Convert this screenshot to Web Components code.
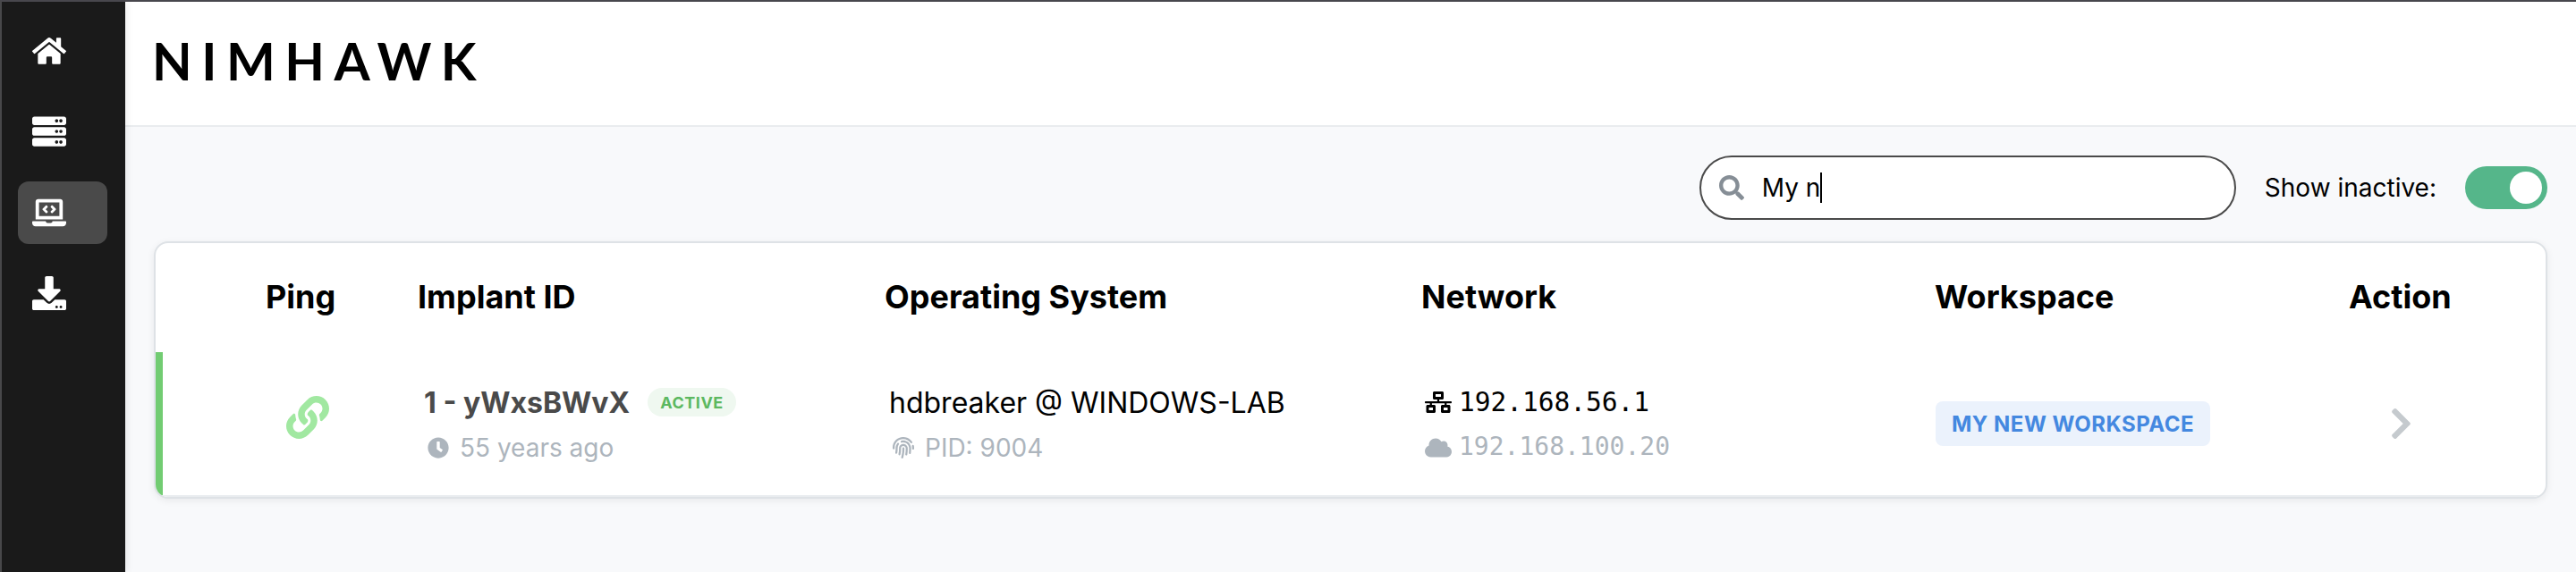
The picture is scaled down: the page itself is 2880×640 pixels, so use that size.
<!DOCTYPE html>
<html lang="en">
<head>
<meta charset="utf-8">
<title>Nimhawk</title>
<style>
html,body{margin:0;height:100%;background:#f8f9fb;font-family:Inter,"Noto Sans",sans-serif;color:#000}
body{height:640px;overflow:hidden}
</style>
</head>
<body>
<nh-shell>
  <nh-nav slot="nav">
    <nh-nav-item icon="home"></nh-nav-item>
    <nh-nav-item icon="server"></nh-nav-item>
    <nh-nav-item icon="laptop" active></nh-nav-item>
    <nh-nav-item icon="download"></nh-nav-item>
  </nh-nav>
  <nh-brand slot="header">NIMHAWK</nh-brand>
  <nh-toolbar>
    <nh-search>My n</nh-search>
    <nh-toggle>Show inactive:</nh-toggle>
  </nh-toolbar>
  <nh-table></nh-table>
</nh-shell>
<script>
const ICONS={
home:['0 0 576 512','M280.37 148.26L96 300.11V464a16 16 0 0 0 16 16l112.06-.29a16 16 0 0 0 15.92-16V368a16 16 0 0 1 16-16h64a16 16 0 0 1 16 16v95.64a16 16 0 0 0 16 16.05L464 480a16 16 0 0 0 16-16V300L295.67 148.26a12.19 12.19 0 0 0-15.3 0zM571.6 251.47L488 182.56V44.05a12 12 0 0 0-12-12h-56a12 12 0 0 0-12 12v72.61L318.47 43a48 48 0 0 0-61 0L4.34 251.47a12 12 0 0 0-1.6 16.9l25.5 31A12 12 0 0 0 45.15 301l235.22-193.74a12.19 12.19 0 0 1 15.3 0L530.9 301a12 12 0 0 0 16.9-1.6l25.5-31a12 12 0 0 0-1.7-16.93z'],
server:['0 0 512 512','M480 160H32c-17.673 0-32-14.327-32-32V64c0-17.673 14.327-32 32-32h448c17.673 0 32 14.327 32 32v64c0 17.673-14.327 32-32 32zm-48-88c-13.255 0-24 10.745-24 24s10.745 24 24 24 24-10.745 24-24-10.745-24-24-24zm-64 0c-13.255 0-24 10.745-24 24s10.745 24 24 24 24-10.745 24-24-10.745-24-24-24zm112 248H32c-17.673 0-32-14.327-32-32v-64c0-17.673 14.327-32 32-32h448c17.673 0 32 14.327 32 32v64c0 17.673-14.327 32-32 32zm-48-88c-13.255 0-24 10.745-24 24s10.745 24 24 24 24-10.745 24-24-10.745-24-24-24zm-64 0c-13.255 0-24 10.745-24 24s10.745 24 24 24 24-10.745 24-24-10.745-24-24-24zm112 248H32c-17.673 0-32-14.327-32-32v-64c0-17.673 14.327-32 32-32h448c17.673 0 32 14.327 32 32v64c0 17.673-14.327 32-32 32zm-48-88c-13.255 0-24 10.745-24 24s10.745 24 24 24 24-10.745 24-24-10.745-24-24-24zm-64 0c-13.255 0-24 10.745-24 24s10.745 24 24 24 24-10.745 24-24-10.745-24-24-24z'],
laptop:['0 0 640 512','M255.03 261.65c6.25 6.25 16.38 6.25 22.63 0l11.31-11.31c6.25-6.25 6.25-16.38 0-22.63L253.25 192l35.71-35.72c6.25-6.25 6.25-16.38 0-22.63l-11.31-11.31c-6.25-6.25-16.38-6.25-22.63 0l-58.34 58.34c-6.25 6.25-6.25 16.38 0 22.63l58.35 58.34zm96.01-11.3l11.31 11.31c6.25 6.25 16.38 6.25 22.63 0l58.34-58.34c6.25-6.25 6.25-16.38 0-22.63l-58.34-58.34c-6.25-6.25-16.38-6.25-22.63 0l-11.31 11.31c-6.25 6.25-6.25 16.38 0 22.63L386.75 192l-35.71 35.72c-6.25 6.25-6.25 16.38 0 22.63zM624 416H381.54c-.74 19.81-14.71 32-32.74 32H288c-18.69 0-33.02-17.47-32.77-32H16c-8.8 0-16 7.2-16 16v16c0 35.2 28.8 64 64 64h512c35.2 0 64-28.8 64-64v-16c0-8.8-7.2-16-16-16zM576 48c0-26.4-21.6-48-48-48H112C85.6 0 64 21.6 64 48v336h512V48zm-64 272H128V64h384v256z'],
download:['0 0 512 512','M216 0h80c13.3 0 24 10.7 24 24v168h87.7c17.800 0 26.700 21.500 14.100 34.100L269.700 378.300c-7.500 7.500-19.800 7.500-27.300 0L90.100 226.100c-12.600-12.600-3.700-34.100 14.100-34.100H192V24c0-13.300 10.700-24 24-24zm296 376v112c0 13.300-10.700 24-24 24H24c-13.300 0-24-10.700-24-24V376c0-13.300 10.700-24 24-24h146.700l49 49c20.100 20.100 52.500 20.100 72.600 0l49-49H488c13.300 0 24 10.700 24 24zm-124 88c0-11-9-20-20-20s-20 9-20 20 9 20 20 20 20-9 20-20zm64 0c0-11-9-20-20-20s-20 9-20 20 9 20 20 20 20-9 20-20z'],
search:['0 0 512 512','M505 442.700L405.300 343c-4.500-4.500-10.600-7-17-7H372c27.600-35.300 44-79.700 44-128C416 93.100 322.900 0 208 0S0 93.100 0 208s93.100 208 208 208c48.300 0 92.700-16.400 128-44v16.300c0 6.400 2.500 12.500 7 17l99.700 99.700c9.400 9.400 24.600 9.400 33.900 0l28.300-28.300c9.400-9.400 9.400-24.600.1-34zM208 336c-70.700 0-128-57.200-128-128 0-70.700 57.200-128 128-128 70.700 0 128 57.200 128 128 0 70.700-57.200 128-128 128z'],
link:['0 0 512 512','M326.612 185.391c59.747 59.809 58.927 155.698.36 214.59-.11.12-.24.25-.36.37l-67.2 67.2c-59.270 59.270-155.699 59.262-214.960 0-59.270-59.260-59.270-155.700 0-214.960l37.106-37.106c9.840-9.840 26.786-3.300 27.294 10.606.648 17.722 3.826 35.527 9.690 52.721 1.986 5.822.567 12.262-3.783 16.612l-13.087 13.087c-28.026 28.026-28.905 73.660-1.155 101.960 28.024 28.579 74.086 28.749 102.325.51l67.200-67.190c28.191-28.191 28.073-73.757 0-101.830-3.701-3.694-7.429-6.564-10.341-8.569a16.037 16.037 0 0 1-6.947-12.606c-.396-10.567 3.348-21.456 11.698-29.806l21.054-21.055c5.521-5.521 14.182-6.199 20.584-1.731a152.482 152.482 0 0 1 20.522 17.197zM467.547 44.449c-59.261-59.262-155.690-59.270-214.960 0l-67.200 67.200c-.12.12-.25.25-.36.37-58.566 58.892-59.387 154.781.36 214.590a152.454 152.454 0 0 0 20.521 17.196c6.402 4.468 15.064 3.789 20.584-1.731l21.054-21.055c8.350-8.350 12.094-19.239 11.698-29.806a16.037 16.037 0 0 0-6.947-12.606c-2.912-2.005-6.640-4.875-10.341-8.569-28.073-28.073-28.191-73.639 0-101.830l67.200-67.190c28.239-28.239 74.300-28.069 102.325.51 27.750 28.300 26.872 73.934-1.155 101.960l-13.087 13.087c-4.350 4.350-5.769 10.790-3.783 16.612 5.864 17.194 9.042 34.999 9.690 52.721.509 13.906 17.454 20.446 27.294 10.606l37.106-37.106c59.271-59.259 59.271-155.699.001-214.959z'],
clock:['0 0 512 512','M256 8C119 8 8 119 8 256s111 248 248 248 248-111 248-248S393 8 256 8zm57.100 350.100L224.900 294c-3.100-2.300-4.900-5.900-4.900-9.700V116c0-6.600 5.400-12 12-12h48c6.600 0 12 5.400 12 12v137.700l63.500 46.200c5.400 3.900 6.500 11.400 2.600 16.800l-28.200 38.800c-3.900 5.300-11.400 6.500-16.800 2.600z'],
network:['0 0 640 512','M640 264v-16c0-8.840-7.160-16-16-16H344v-40h72c17.670 0 32-14.330 32-32V32c0-17.670-14.330-32-32-32H224c-17.670 0-32 14.330-32 32v128c0 17.670 14.330 32 32 32h72v40H16c-8.840 0-16 7.160-16 16v16c0 8.840 7.160 16 16 16h104v40H64c-17.670 0-32 14.330-32 32v128c0 17.670 14.330 32 32 32h160c17.670 0 32-14.330 32-32V352c0-17.670-14.330-32-32-32h-56v-40h304v40h-56c-17.670 0-32 14.330-32 32v128c0 17.670 14.330 32 32 32h160c17.670 0 32-14.330 32-32V352c0-17.670-14.330-32-32-32h-56v-40h104c8.840 0 16-7.160 16-16zM256 128V64h128v64H256zm-64 320H96v-64h96v64zm352 0h-96v-64h96v64z'],
cloud:['0 0 640 512','M537.600 226.600c4.100-10.700 6.400-22.400 6.400-34.600 0-53-43-96-96-96-19.700 0-38.100 6-53.300 16.200C367 64.200 315.300 32 256 32c-88.400 0-160 71.600-160 160 0 2.700.1 5.400.2 8.100C40.200 219.800 0 273.200 0 336c0 79.500 64.500 144 144 144h368c70.700 0 128-57.300 128-128 0-61.900-44-113.600-102.400-125.400z'],
chevron:['0 0 320 512','M285.476 272.971L91.132 467.314c-9.373 9.373-24.569 9.373-33.941 0l-22.667-22.667c-9.357-9.357-9.375-24.522-.04-33.901L188.505 256 34.484 101.255c-9.335-9.379-9.317-24.544.04-33.901l22.667-22.667c9.373-9.373 24.569-9.373 33.941 0L285.475 239.030c9.373 9.372 9.373 24.568.001 33.941z'],
finger:['0 0 512 512','M256.120 245.960c-13.250 0-24 10.740-24 24 1.140 72.250-8.140 141.900-27.700 211.550-2.730 9.720 2.150 30.490 23.120 30.490 10.480 0 20.110-6.920 23.090-17.520 13.530-47.910 31.040-125.410 29.480-224.520.01-13.250-10.730-24-23.990-24zm-.86-81.730C194 164.160 151.250 211.300 152.100 265.320c.75 47.940-3.750 95.910-13.370 142.550-2.690 12.980 5.670 25.690 18.640 28.360 13.050 2.670 25.670-5.660 28.360-18.640 10.340-50.090 15.170-101.580 14.370-153.020-.41-25.950 19.920-52.490 54.450-52.340 31.310.47 57.150 25.340 57.620 55.470.77 48.050-2.810 96.330-10.610 143.550-2.170 13.060 6.690 25.420 19.760 27.580 19.970 3.330 26.810-15.100 27.580-19.770 8.280-50.030 12.060-101.210 11.270-152.110-.88-55.800-47.940-101.880-104.910-102.720zm-110.690-19.780c-10.300-8.340-25.370-6.800-33.760 3.480-25.620 31.500-39.390 71.280-38.750 112 .59 37.580-2.470 75.270-9.110 112.050-2.340 13.050 6.310 25.530 19.360 27.890 20.110 3.500 27.070-14.810 27.890-19.360 7.190-39.840 10.500-80.660 9.860-121.330-.47-29.880 9.200-57.880 28-80.970 8.350-10.280 6.790-25.390-3.490-33.760zm109.470-62.330c-15.410-.41-30.870 1.440-45.780 4.970-12.890 3.060-20.870 15.980-17.830 28.890 3.060 12.890 16 20.830 28.890 17.830 11.050-2.610 22.470-3.770 34-3.690 75.430 1.130 137.730 61.500 138.880 134.580.59 37.880-1.280 76.110-5.580 113.630-1.500 13.170 7.950 25.080 21.110 26.580 16.720 1.950 25.510-11.880 26.580-21.110a929.060 929.060 0 0 0 5.890-119.850c-1.560-98.750-85.070-180.330-186.160-181.830zm252.070 121.450c-2.860-12.920-15.510-21.200-28.610-18.270-12.940 2.860-21.120 15.660-18.260 28.610 4.710 21.410 4.910 37.410 4.700 61.600-.11 13.270 10.550 24.090 23.800 24.200h.2c13.170 0 23.890-10.610 24-23.800.18-22.180.4-44.110-5.830-72.340zm-40.120-90.720C417.290 43.460 337.600 1.290 252.810.02 183.020-.82 118.470 24.910 70.460 72.940 24.090 119.370-.9 181.040.14 246.650l-.12 21.470c-.39 13.250 10.030 24.310 23.280 24.690.23.02.48.02.72.02 12.920 0 23.590-10.300 23.970-23.300l.16-23.640c-.83-52.500 19.160-101.860 56.280-139 38.760-38.800 91.340-59.670 147.680-58.860 69.450 1.030 134.730 35.560 174.620 92.390 7.610 10.860 22.560 13.450 33.420 5.860 10.840-7.620 13.460-22.590 5.840-33.450z']
};
const define=(name,html)=>{
  const t=document.createElement('template');t.innerHTML=html;
  customElements.define(name,class extends HTMLElement{
    constructor(){super();this.attachShadow({mode:'open'}).append(t.content.cloneNode(true));}
  });
};
customElements.define('nh-icon',class extends HTMLElement{
  connectedCallback(){
    const [box,d]=ICONS[this.getAttribute('name')];
    if(!this.shadowRoot)this.attachShadow({mode:'open'});
    this.shadowRoot.innerHTML=`<style>:host{display:block;flex:none}svg{display:block;width:100%;height:100%}</style><svg viewBox="${box}" fill="currentColor"><path d="${d}"/></svg>`;
  }
});
customElements.define('nh-nav-item',class extends HTMLElement{
  connectedCallback(){
    this.attachShadow({mode:'open'}).innerHTML=`<style>:host{display:flex;align-items:center;box-sizing:border-box;width:100px;height:70px;padding-left:16px;border-radius:12px;color:#fff}:host([active]){background:#4a4a4a}nh-icon{width:38px;height:38px}</style><nh-icon name="${this.getAttribute('icon')}"></nh-icon>`;
  }
});
define('nh-nav',`<style>:host{display:flex;flex-direction:column;gap:20.4px;box-sizing:border-box;width:138px;height:638px;padding:20px 0 0 18px;background:#1a1a1a;box-shadow:0 0 10px rgba(0,0,0,.1)}</style><slot></slot>`);
define('nh-brand',`<style>:host{display:block;font:700 58px/70px Lato,sans-serif;letter-spacing:10.5px;white-space:nowrap}</style><slot></slot>`);
define('nh-shell',`<style>
:host{display:grid;grid-template-columns:138px 1fr;box-sizing:border-box;height:640px;border-top:2px solid #48474d;border-left:2px solid #48484a;background:#f8f9fb;overflow:hidden}
.nav{position:relative;z-index:1}.col{min-width:0}
header{box-sizing:border-box;height:140px;padding:31px 0 0 30px;background:#fff;border-bottom:2px solid #e9ecef}
main{padding:32px 32px 0}
</style><div class="nav"><slot name="nav"></slot></div><div class="col"><header><slot name="header"></slot></header><main><slot></slot></main></div>`);
define('nh-toolbar',`<style>:host{display:flex;justify-content:flex-end;align-items:center;gap:32px;height:72px}</style><slot></slot>`);
define('nh-search',`<style>
:host{display:flex;align-items:center;box-sizing:border-box;width:600px;height:72px;padding-left:20px;border:2px solid #4a4a4a;border-radius:36px;background:#fff;font-size:28px}
nh-icon{width:28px;height:28px;color:#868e96;margin-right:20px}i{width:2px;height:34px;background:#000}
</style><nh-icon name="search"></nh-icon><span><slot></slot></span><i></i>`);
define('nh-toggle',`<style>
:host{display:flex;align-items:center;gap:32px;font-size:28px;white-space:nowrap}
.t{box-sizing:border-box;width:92px;height:48px;border-radius:24px;background:#55b68a;padding:6px;display:flex;justify-content:flex-end}
i{width:36px;height:36px;border-radius:50%;background:#fff}
</style><span><slot></slot></span><div class="t"><i></i></div>`);
define('nh-badge',`<style>:host{display:flex;align-items:center;justify-content:center;box-sizing:border-box;width:99px;height:32px;border-radius:16px;background:#eff8f0;color:#5cb860;font-size:18px;font-weight:700;letter-spacing:.5px}</style><slot></slot>`);
define('nh-tag',`<style>:host{display:flex;align-items:center;justify-content:center;box-sizing:border-box;width:307px;height:50px;border-radius:8px;background:#ebf2fc;color:#4488e0;font-size:24px;font-weight:700;letter-spacing:.5px;white-space:nowrap}</style><slot></slot>`);
define('nh-table',`<style>
:host{display:block;box-sizing:border-box;height:288px;margin-top:24px;border:2px solid #dee2e6;border-radius:16px;background:#fff;box-shadow:0 2px 8px rgba(0,0,0,.07);overflow:hidden}
.row{display:grid;grid-template-columns:293px 522px 600px 574px 427px 1fr;box-sizing:border-box;white-space:nowrap}
.head{height:122px;padding-bottom:2px;align-items:center;font-size:36px;font-weight:700}
.head>*{line-height:44px}
.data{height:162px;border-left:8px solid #72cc72;border-bottom:2px solid #e9ecef;grid-template-columns:285px 522px 600px 574px 427px 1fr}
.ping{padding-left:123px}.data .ping{padding:49px 0 0 138px}
.line{display:flex;align-items:center;height:50px}
.stack{padding-top:31px}
.sub{height:51px;color:#adb5bd;font-size:28px}
.id{font-size:32px;font-weight:700;color:#4a4a4a}
.os{font-size:32px}
.mono{font-family:"DejaVu Sans Mono",monospace;font-size:29.5px}
.mono.sub{font-size:28px}.mono.sub span{padding-bottom:3px}
</style>
<div class="row head"><span class="ping">Ping</span><span>Implant ID</span><span>Operating System</span><span>Network</span><span>Workspace</span><span style="padding-left:36px">Action</span></div>
<div class="row data">
<div class="ping"><nh-icon name="link" style="width:48px;height:48px;color:#a1e8a1"></nh-icon></div>
<div class="stack" style="padding-left:7px"><div class="line id"><span>1 - yWxsBWvX</span><nh-badge style="margin-left:20px">ACTIVE</nh-badge></div><div class="line sub"><nh-icon name="clock" style="width:24px;height:24px;margin:0 12px 0 4px"></nh-icon><span>55 years ago</span></div></div>
<div class="stack" style="padding-left:5px"><div class="line os">hdbreaker @ WINDOWS-LAB</div><div class="line sub"><nh-icon name="finger" style="width:24px;height:24px;margin:0 12px 0 4px"></nh-icon><span>PID: 9004</span></div></div>
<div class="stack" style="padding-left:4px"><div class="line mono"><nh-icon name="network" style="width:30px;height:24px;margin-right:8px"></nh-icon><span>192.168.56.1</span></div><div class="line mono sub"><nh-icon name="cloud" style="width:30px;height:24px;margin-right:8px"></nh-icon><span>192.168.100.20</span></div></div>
<div style="padding:55px 0 0 1px"><nh-tag>MY NEW WORKSPACE</nh-tag></div>
<div style="padding:60px 0 0 82px"><nh-icon name="chevron" style="width:25px;height:40px;color:#c5cace"></nh-icon></div>
</div>`);
</script>
</body>
</html>
